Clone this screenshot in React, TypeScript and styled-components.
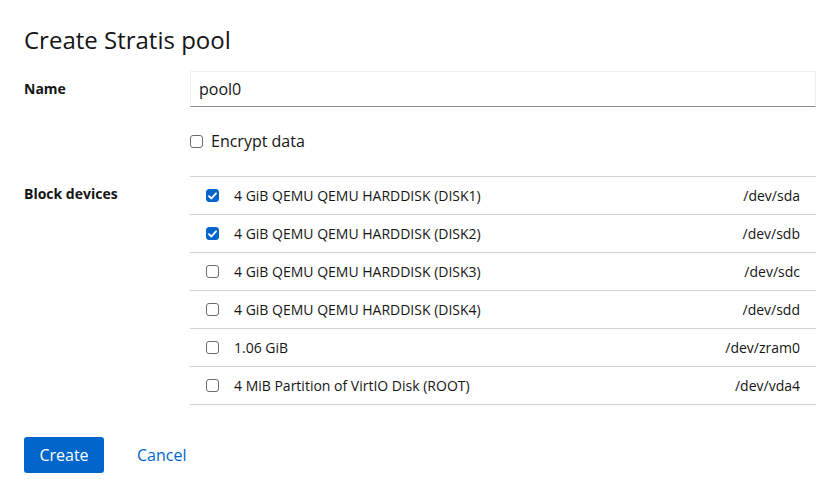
import React from "react";
import styled, { createGlobalStyle } from "styled-components";

const Global = createGlobalStyle`
  html, body { margin: 0; padding: 0; background: #fff; }
  body { font-family: "Open Sans", "Noto Sans", sans-serif; color: #151515; }
  * { box-sizing: border-box; }
`;

const Page = styled.div`
  width: 840px;
  padding: 24px 24px 0 24px;
`;

const Title = styled.h1`
  margin: 0;
  font-size: 24px;
  font-weight: 400;
  line-height: 31px;
  color: #151515;
`;

const Form = styled.div`
  margin-top: 16px;
  display: grid;
  grid-template-columns: 150px 1fr;
  column-gap: 16px;
  row-gap: 24px;
`;

const Label = styled.div<{ $pt: number }>`
  font-size: 14px;
  font-weight: 700;
  line-height: 20px;
  padding-top: ${(p) => p.$pt}px;
`;

const Input = styled.div`
  height: 36px;
  border: 1px solid #f0f0f0;
  border-bottom-color: #8a8d90;
  padding: 0 8px;
  font-size: 16px;
  line-height: 34px;
`;

const CheckRow = styled.label`
  display: flex;
  align-items: center;
  gap: 8px;
  font-size: 16px;
  line-height: 21px;
`;

const Box = styled.span<{ $checked?: boolean }>`
  width: 13px;
  height: 13px;
  flex: none;
  border-radius: 3px;
  border: 1px solid ${(p) => (p.$checked ? "#0066cc" : "#6a6e73")};
  background: ${(p) => (p.$checked ? "#0066cc" : "#fff")};
  display: inline-flex;
  align-items: center;
  justify-content: center;
`;

const Table = styled.div`
  border-top: 1px solid #d2d2d2;
`;

const Row = styled.div`
  height: 38px;
  border-bottom: 1px solid #d2d2d2;
  display: flex;
  align-items: center;
  padding: 0 16px;
  font-size: 14px;
`;

const Desc = styled.span`
  flex: 1;
  margin-left: 15px;
`;

const Dev = styled.span`
  text-align: right;
`;

const Footer = styled.div`
  margin-top: 32px;
  display: flex;
  align-items: center;
  gap: 9px;
`;

const Primary = styled.button`
  height: 36px;
  width: 80px;
  border: none;
  border-radius: 3px;
  background: #0066cc;
  color: #fff;
  font-family: inherit;
  font-size: 16px;
`;

const Link = styled.button`
  height: 36px;
  padding: 0 24px;
  border: none;
  background: none;
  color: #0066cc;
  font-family: inherit;
  font-size: 16px;
`;

function Check({ checked }: { checked?: boolean }) {
  return (
    <Box $checked={checked}>
      {checked && (
        <svg width="9" height="8" viewBox="0 0 9 8">
          <path d="M1 4.2 L3.4 6.5 L8 1.3" fill="none" stroke="#fff" strokeWidth="1.8" strokeLinecap="round" strokeLinejoin="round" />
        </svg>
      )}
    </Box>
  );
}

const devices = [
  { name: "4 GiB QEMU QEMU HARDDISK (DISK1)", dev: "/dev/sda", checked: true },
  { name: "4 GiB QEMU QEMU HARDDISK (DISK2)", dev: "/dev/sdb", checked: true },
  { name: "4 GiB QEMU QEMU HARDDISK (DISK3)", dev: "/dev/sdc" },
  { name: "4 GiB QEMU QEMU HARDDISK (DISK4)", dev: "/dev/sdd" },
  { name: "1.06 GiB", dev: "/dev/zram0" },
  { name: "4 MiB Partition of VirtIO Disk (ROOT)", dev: "/dev/vda4" },
];

export default function App() {
  return (
    <Page>
      <Global />
      <Title>Create Stratis pool</Title>
      <Form>
        <Label $pt={8}>Name</Label>
        <Input>pool0</Input>
        <div />
        <CheckRow>
          <Check />
          Encrypt data
        </CheckRow>
        <Label $pt={8}>Block devices</Label>
        <Table>
          {devices.map((d) => (
            <Row key={d.dev}>
              <Check checked={d.checked} />
              <Desc>{d.name}</Desc>
              <Dev>{d.dev}</Dev>
            </Row>
          ))}
        </Table>
      </Form>
      <Footer>
        <Primary>Create</Primary>
        <Link>Cancel</Link>
      </Footer>
    </Page>
  );
}
